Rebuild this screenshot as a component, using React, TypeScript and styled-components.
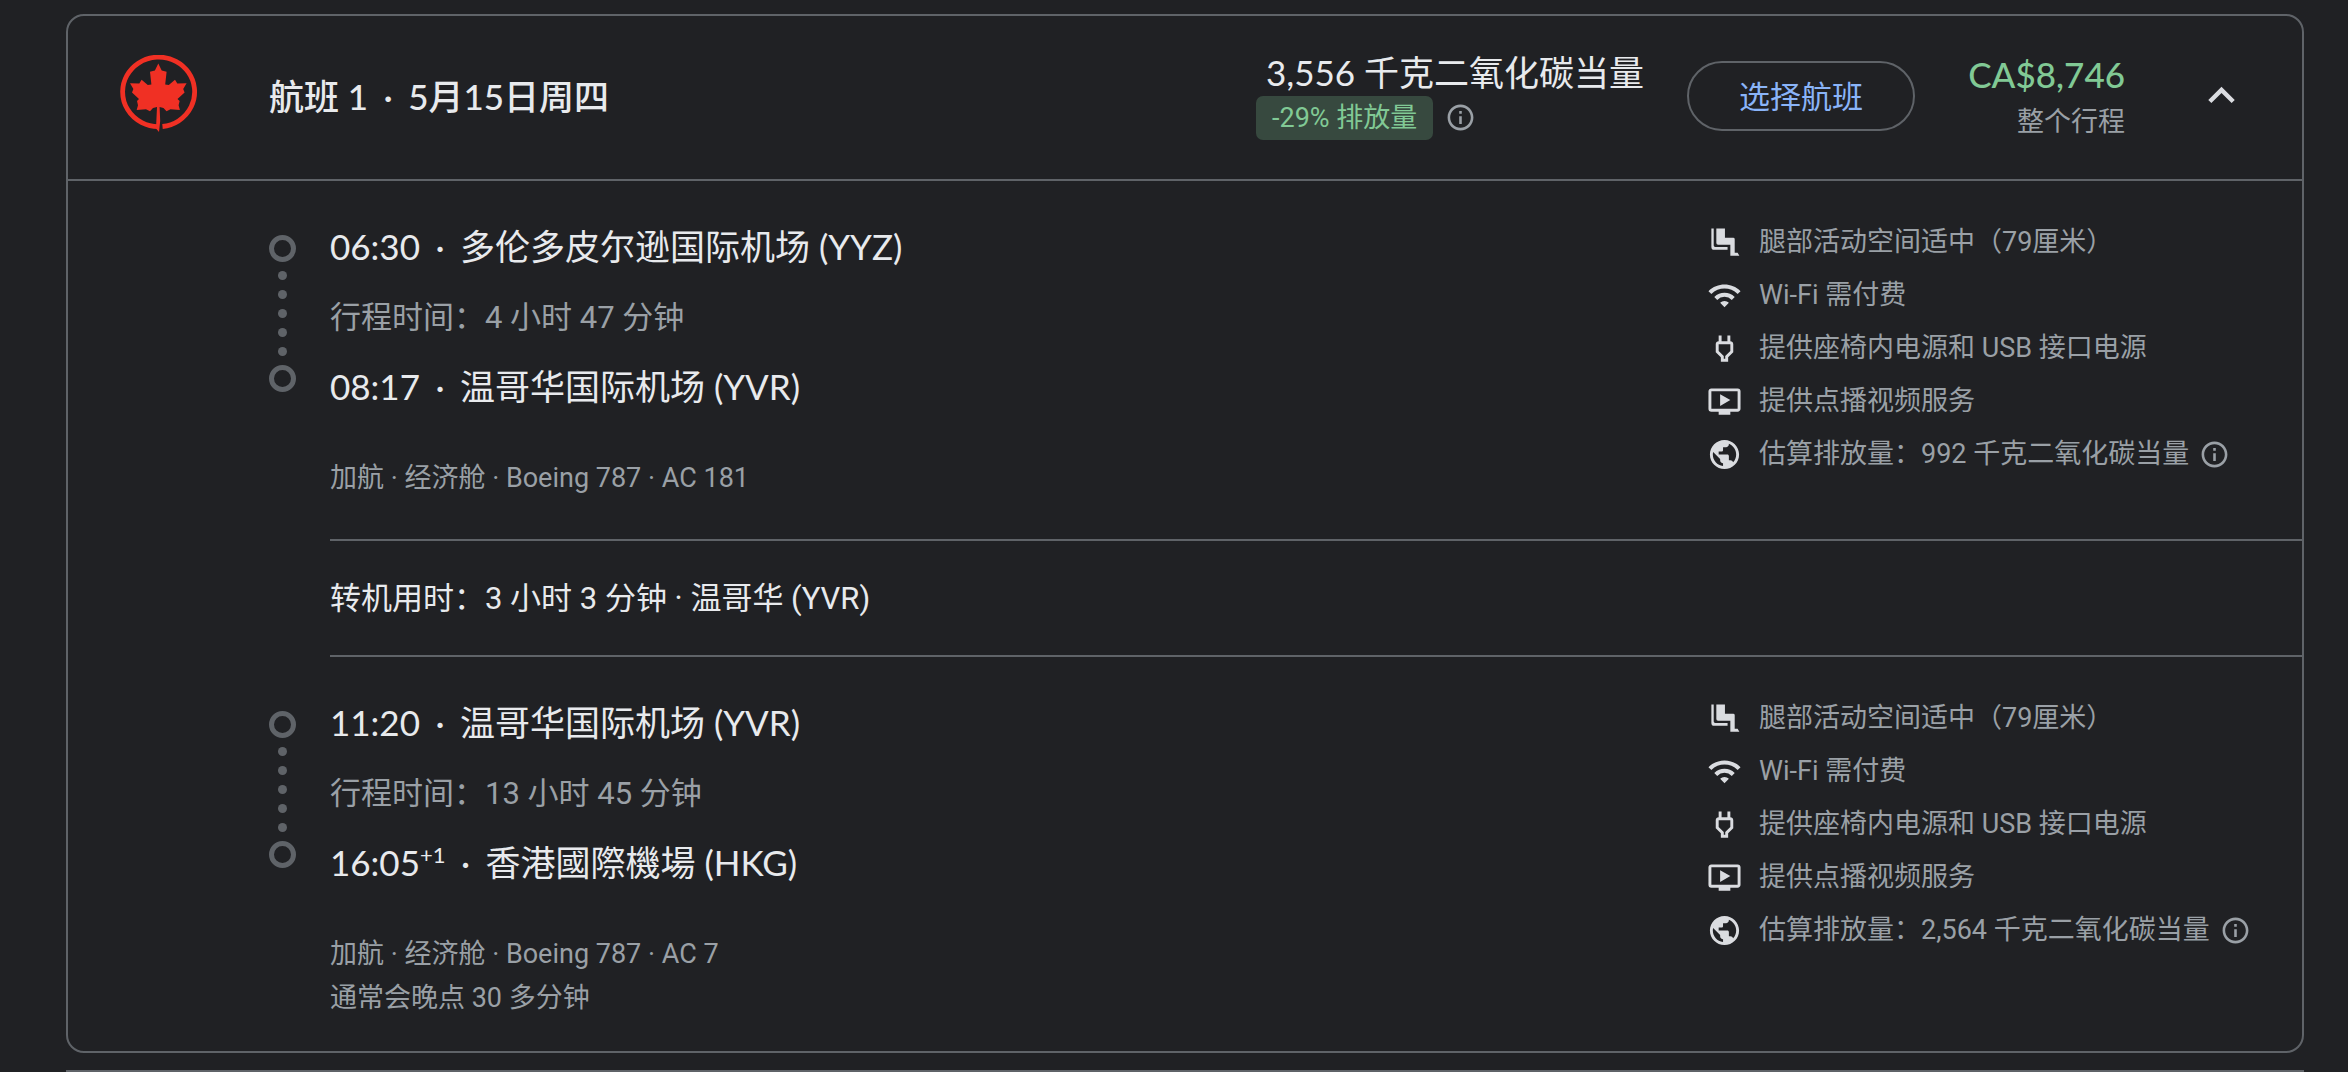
import React from 'react';
import styled, { createGlobalStyle } from 'styled-components';
import { MdWifi, MdOutlinePower, MdOndemandVideo, MdPublic, MdInfoOutline, MdExpandLess } from 'react-icons/md';

const bodyFont = `Roboto, "Noto Sans CJK SC", sans-serif`;
const titleFont = `Lato, "Noto Sans CJK SC", sans-serif`;
const line = '#5f6368';
const text = '#e8eaed';
const muted = '#9aa0a6';
const iconColor = '#dadce0';

const GlobalStyle = createGlobalStyle`
  * { box-sizing: border-box; }
  body { margin: 0; background: #202124; color: ${text}; font-family: ${bodyFont}; }
  h2, h3, p, ul, ol { margin: 0; padding: 0; font-weight: 400; }
  ul, ol { list-style: none; }
  button { font: inherit; color: inherit; background: none; border: 0; padding: 0; cursor: pointer; }
  svg { display: block; flex: none; }
`;

const Page = styled.main`
  display: flex;
  flex-direction: column;
  gap: 17px;
  padding: 14px 44px 0 66px;
`;

const Card = styled.article`
  border: 2px solid ${line};
  border-radius: 18px;
`;

const NextCard = styled.div`
  border-top: 2px solid ${line};
`;

const Header = styled.header`
  display: flex;
  align-items: center;
  height: 165px;
  padding: 0 54px 4px 51px;
  border-bottom: 2px solid ${line};
`;

const Title = styled.h2`
  flex: 1;
  margin-left: 71px;
  font: 500 35px/44px ${titleFont};
`;

const Separator = styled.span`
  display: inline-block;
  width: 40px;
  text-align: center;
`;

const Emissions = styled.div`
  display: flex;
  flex-direction: column;
  width: 388px;
  margin-right: 43px;
`;

const EmissionsTotal = styled.p`
  padding-bottom: 4px;
  font: 400 35px/40px ${titleFont};
  text-align: right;
  white-space: nowrap;
`;

const EmissionsRow = styled.div`
  display: flex;
  align-items: center;
  gap: 12px;
`;

const Badge = styled.span`
  padding: 0 16px;
  border-radius: 7px;
  background: #37493f;
  color: #81c995;
  font-size: 27px;
  line-height: 44px;
`;

const InfoButton = styled.button`
  display: inline-flex;
  color: ${muted};
`;

const SelectButton = styled.button`
  && {
    width: 228px;
    height: 70px;
    border: 2px solid ${line};
    border-radius: 35px;
    color: #8ab4f8;
    font: 400 31px/44px ${titleFont};
  }
`;

const Price = styled.div`
  width: 210px;
  text-align: right;
`;

const PriceAmount = styled.p`
  color: #81c995;
  font: 500 35px/52px ${titleFont};
`;

const PriceNote = styled.p`
  color: ${muted};
  font-size: 27px;
  line-height: 44px;
`;

const CollapseButton = styled.button`
  display: flex;
  margin-left: 70px;
  color: ${iconColor};
`;

const Leg = styled.section<{ $last: boolean }>`
  display: flex;
  justify-content: space-between;
  padding: 39px 50px ${(p) => (p.$last ? 31 : 39)}px 200px;
`;

const Route = styled.div`
  display: grid;
  grid-template-columns: 28px 1fr;
  column-gap: 34px;
`;

const Track = styled.div`
  display: flex;
  flex-direction: column;
  align-items: center;
  padding-top: 15px;
`;

const Stop = styled.i`
  width: 27px;
  height: 27px;
  border: 5px solid ${line};
  border-radius: 50%;
`;

const Dots = styled.div`
  display: flex;
  flex-direction: column;
  gap: 10px;
  padding: 9px 0;
`;

const Dot = styled.i`
  width: 9px;
  height: 9px;
  border-radius: 50%;
  background: ${line};
`;

const Stops = styled.div`
  display: flex;
  flex-direction: column;
  gap: 24px;
  padding-top: 4px;
`;

const StopName = styled.h3`
  font: 400 35px/44px ${titleFont};
  white-space: nowrap;
`;

const DayOffset = styled.sup`
  font-size: 22px;
  line-height: 0;
`;

const Duration = styled.p`
  padding-top: 4px;
  color: ${muted};
  font-size: 31px;
  line-height: 44px;
`;

const FlightInfo = styled.div`
  grid-column: 2;
  padding-top: 48px;
  color: ${muted};
  font-size: 27px;
  line-height: 44px;
`;

const Amenities = styled.ul`
  display: flex;
  flex-direction: column;
  gap: 9px;
  width: 545px;
`;

const Amenity = styled.li`
  display: flex;
  align-items: center;
  color: ${muted};
  font-size: 27px;
  line-height: 44px;
  white-space: nowrap;
`;

const AmenityIcon = styled.span`
  margin-right: 17px;
  color: ${iconColor};
`;

const Layover = styled.p`
  margin-left: 262px;
  padding: 36px 0 34px;
  border: solid ${line};
  border-width: 2px 0;
  font-size: 31px;
  line-height: 44px;
`;

const AmenityInfo = styled(InfoButton)`
  margin-left: 10px;
`;

function AirlineLogo() {
  return (
    <svg width="79" height="82" viewBox="0 0 79 82" role="img" aria-label="加航">
      <path d="M39.300 71.700A36 34.800 0 1 1 43.500 71.500" fill="none" stroke="#f03024" strokeWidth="4.800" />
      <path
        fill="#f03024"
        d="M39.300 8.500L42.700 15.500 47.600 16.800 46.200 29.500 49.800 30 56 24.800 58.300 28.500 67.600 28.300 64.200 34 65.600 37.500 58.500 44 60.600 46 59.600 50.300 60.900 55 51.500 54.300 47.500 56.300 44.500 53 40.600 52 41.200 66 40 77 37 73.500 38 52 34 53 31 56.300 27 54.300 17.700 55 19 50.300 18 46 20 44 13 37.500 14.400 34 11 28.300 20.300 28.500 22.600 24.800 28.800 30 32.400 29.500 31 16.800 35.900 15.500z"
      />
    </svg>
  );
}

function LegroomIcon() {
  return (
    <svg width="35" height="35" viewBox="0 0 24 24" fill="currentColor">
      <path d="M3 2.400h1.600V14q0 1 1 1h8.500v2H5q-2 0-2-2zM6.400 2.400h5.900v6.400H18q1 0 1 1V19h2l1.200 2H16v-7.400H7.600q-1.200 0-1.200-1.200z" />
    </svg>
  );
}

interface LegData {
  from: string;
  departs: string;
  to: string;
  arrives: string;
  dayOffset?: string;
  duration: string;
  info: string[];
  emissions: string;
}

const legs: LegData[] = [
  {
    departs: '06:30',
    from: '多伦多皮尔逊国际机场 (YYZ)',
    duration: '4 小时 47 分钟',
    arrives: '08:17',
    to: '温哥华国际机场 (YVR)',
    info: ['加航 · 经济舱 · Boeing 787 · AC 181'],
    emissions: '992',
  },
  {
    departs: '11:20',
    from: '温哥华国际机场 (YVR)',
    duration: '13 小时 45 分钟',
    arrives: '16:05',
    dayOffset: '+1',
    to: '香港國際機場 (HKG)',
    info: ['加航 · 经济舱 · Boeing 787 · AC 7', '通常会晚点 30 多分钟'],
    emissions: '2,564',
  },
];

function FlightLeg({ leg, last = false }: { leg: LegData; last?: boolean }) {
  return (
    <Leg $last={last}>
      <Route>
        <Track aria-hidden="true">
          <Stop />
          <Dots>
            {[0, 1, 2, 3, 4].map((n) => (
              <Dot key={n} />
            ))}
          </Dots>
          <Stop />
        </Track>
        <Stops>
          <StopName>
            {leg.departs}
            <Separator>·</Separator>
            {leg.from}
          </StopName>
          <Duration>行程时间：{leg.duration}</Duration>
          <StopName>
            {leg.arrives}
            {leg.dayOffset && <DayOffset>{leg.dayOffset}</DayOffset>}
            <Separator>·</Separator>
            {leg.to}
          </StopName>
        </Stops>
        <FlightInfo>
          {leg.info.map((row) => (
            <p key={row}>{row}</p>
          ))}
        </FlightInfo>
      </Route>
      <Amenities>
        <Amenity>
          <AmenityIcon><LegroomIcon /></AmenityIcon>
          腿部活动空间适中（79厘米）
        </Amenity>
        <Amenity>
          <AmenityIcon><MdWifi size={35} /></AmenityIcon>
          Wi-Fi 需付费
        </Amenity>
        <Amenity>
          <AmenityIcon><MdOutlinePower size={35} /></AmenityIcon>
          提供座椅内电源和 USB 接口电源
        </Amenity>
        <Amenity>
          <AmenityIcon><MdOndemandVideo size={35} /></AmenityIcon>
          提供点播视频服务
        </Amenity>
        <Amenity>
          <AmenityIcon><MdPublic size={35} /></AmenityIcon>
          估算排放量：{leg.emissions} 千克二氧化碳当量
          <AmenityInfo aria-label="排放量说明"><MdInfoOutline size={31} /></AmenityInfo>
        </Amenity>
      </Amenities>
    </Leg>
  );
}

export default function App() {
  return (
    <>
      <GlobalStyle />
      <Page>
        <Card>
          <Header>
            <AirlineLogo />
            <Title>
              航班 1<Separator>·</Separator>5月15日周四
            </Title>
            <Emissions>
              <EmissionsTotal>3,556 千克二氧化碳当量</EmissionsTotal>
              <EmissionsRow>
                <Badge>-29% 排放量</Badge>
                <InfoButton aria-label="排放量说明"><MdInfoOutline size={31} /></InfoButton>
              </EmissionsRow>
            </Emissions>
            <SelectButton>选择航班</SelectButton>
            <Price>
              <PriceAmount>CA$8,746</PriceAmount>
              <PriceNote>整个行程</PriceNote>
            </Price>
            <CollapseButton aria-label="收起航班详情"><MdExpandLess size={53} /></CollapseButton>
          </Header>
          <FlightLeg leg={legs[0]} />
          <Layover>转机用时：3 小时 3 分钟 · 温哥华 (YVR)</Layover>
          <FlightLeg leg={legs[1]} last />
        </Card>
        <NextCard />
      </Page>
    </>
  );
}
